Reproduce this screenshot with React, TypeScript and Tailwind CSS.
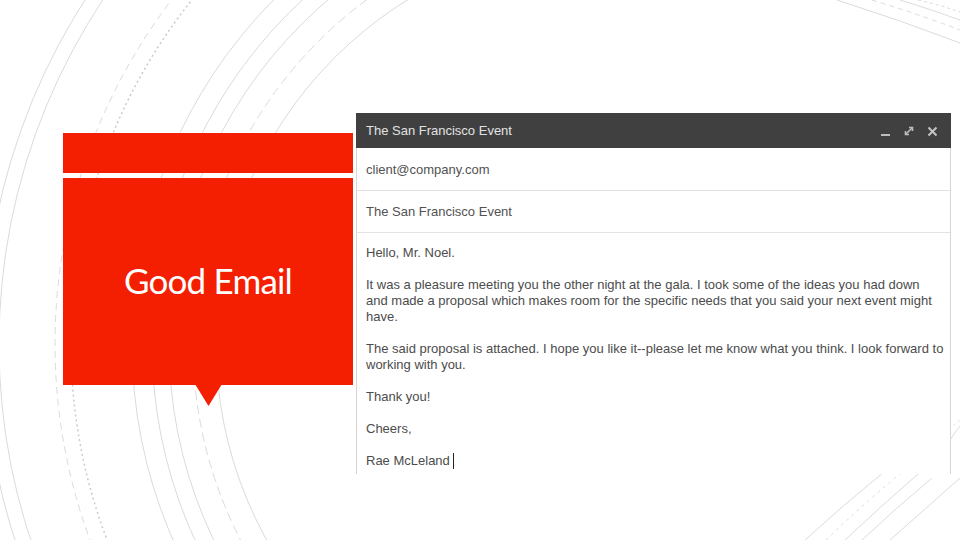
import React from 'react'

const rings = [
  { r: 637, dash: '', w: 0.7 },
  { r: 622, dash: '', w: 0.7 },
  { r: 566, dash: '7 5', w: 0.7 },
  { r: 550, dash: '2 3', w: 1.5 },
  { r: 489, dash: '', w: 0.7 },
  { r: 469, dash: '', w: 0.7 },
  { r: 452, dash: '', w: 0.7 },
  { r: 428, dash: '9 5', w: 0.7 },
  { r: 405, dash: '', w: 0.7 },
]

const topRight = [
  { d: 'M837 0 Q900 20 960 43', dash: '' },
  { d: 'M872 0 Q918 14 960 30', dash: '5 4' },
  { d: 'M900 0 Q930 9 960 20', dash: '' },
  { d: 'M918 0 Q940 5 960 12', dash: '3 3' },
]

const bottomRight = [
  { d: 'M805 540 Q842 506 884 472', dash: '' },
  { d: 'M826 540 Q862 505 900 474', dash: '3 4' },
  { d: 'M845 540 Q880 507 918 474', dash: '' },
  { d: 'M862 540 Q896 508 932 478', dash: '' },
  { d: 'M890 540 Q924 510 960 478', dash: '' },
  { d: 'M905 470 Q930 445 960 420', dash: '2 4' },
  { d: 'M950 440 Q955 432 960 426', dash: '' },
]

function Backdrop() {
  return (
    <svg className="absolute inset-0" width={960} height={540} viewBox="0 0 960 540">
      <defs>
        <clipPath id="left">
          <rect x={0} y={0} width={470} height={540} />
        </clipPath>
      </defs>
      <g clipPath="url(#left)" fill="none" stroke="#cacaca">
        {rings.map(c => (
          <circle key={c.r} cx={621} cy={344} r={c.r} strokeWidth={c.w} strokeDasharray={c.dash || undefined} />
        ))}
      </g>
      <g fill="none" stroke="#cccccc" strokeWidth={0.7}>
        {topRight.map(p => <path key={p.d} d={p.d} strokeDasharray={p.dash || undefined} />)}
        {bottomRight.map(p => <path key={p.d} d={p.d} strokeDasharray={p.dash || undefined} />)}
      </g>
    </svg>
  )
}

function WindowIcons() {
  return (
    <div className="flex items-center gap-[12px]">
      <svg width="11" height="12" viewBox="0 0 11 12">
        <rect x="1" y="9" width="9" height="2" fill="#bdbdbd" />
      </svg>
      <svg width="12" height="12" viewBox="0 0 12 12" fill="none" stroke="#bdbdbd" strokeWidth="1.6">
        <path d="M3 9 L9 3" />
        <path d="M6 2.5 H9.5 V6" />
        <path d="M2.5 6 V9.5 H6" />
      </svg>
      <svg width="11" height="11" viewBox="0 0 11 11" fill="none" stroke="#c4c4c4" strokeWidth="2">
        <path d="M1.5 1.5 L9.5 9.5 M9.5 1.5 L1.5 9.5" />
      </svg>
    </div>
  )
}

export default function App() {
  return (
    <div className="relative w-[960px] h-[540px] overflow-hidden bg-white font-['Liberation_Sans',Arial,sans-serif]">
      <Backdrop />

      <div className="relative flex items-start pt-[113px] pl-[63px]">
        {/* speech card */}
        <div className="mt-[20px] w-[290px] flex flex-col items-center">
          <div className="w-full h-[40px] bg-[#f41e00]" />
          <div className="w-full h-[207px] mt-[5px] bg-[#f41e00] flex items-center justify-center">
            <span className="text-white text-[35px] font-['Lato',sans-serif] tracking-[-0.8px] leading-none pb-[2px]">Good Email</span>
          </div>
          <svg width="27" height="22" viewBox="0 0 27 22" className="-mt-px">
            <polygon points="0,0 27,0 13.5,22" fill="#f41e00" />
          </svg>
        </div>

        {/* compose window */}
        <div className="ml-[3px] w-[595px] h-[361px] flex flex-col bg-white">
          <div className="h-[35px] shrink-0 bg-[#404040] flex items-center justify-between pl-[10px] pr-[13px] pt-[1px]">
            <span className="text-[13px] text-[#e2e2e2]">The San Francisco Event</span>
            <WindowIcons />
          </div>
          <div className="flex-1 flex flex-col border-x border-[#d6d6d6]">
            <div className="h-[43px] shrink-0 flex items-center px-[9px] pt-[2px] border-b border-[#e3e3e3] text-[13px] text-[#525252]">
              client@company.com
            </div>
            <div className="h-[42px] shrink-0 flex items-center px-[9px] border-b border-[#e3e3e3] text-[13px] text-[#525252]">
              The San Francisco Event
            </div>
            <div className="px-[9px] pt-[12px] text-[13px] leading-[16px] text-[#4c4c4c] whitespace-nowrap flex flex-col gap-[16px]">
              <p>Hello, Mr. Noel.</p>
              <p>
                <span className="block">It was a pleasure meeting you the other night at the gala. I took some of the ideas you had down</span>
                <span className="block">and made a proposal which makes room for the specific needs that you said your next event might</span>
                <span className="block">have.</span>
              </p>
              <p>
                <span className="block">The said proposal is attached. I hope you like it--please let me know what you think. I look forward to</span>
                <span className="block">working with you.</span>
              </p>
              <p>Thank you!</p>
              <p>Cheers,</p>
              <p className="flex items-center">
                Rae McLeland
                <span className="ml-[3px] inline-block w-px h-[16px] bg-[#222]" />
              </p>
            </div>
          </div>
        </div>
      </div>
    </div>
  )
}
